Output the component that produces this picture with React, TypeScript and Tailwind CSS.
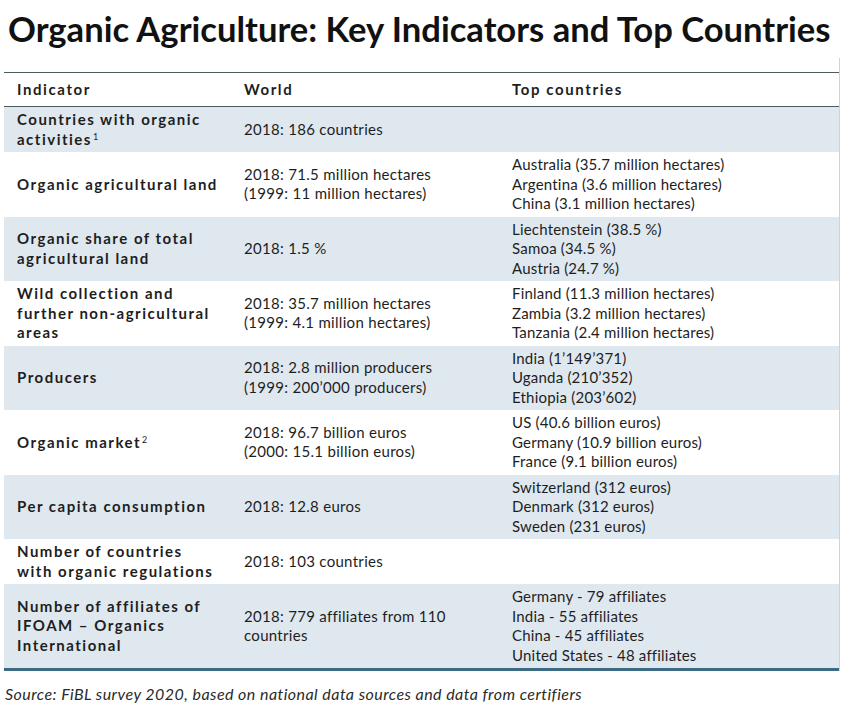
type Row = {
  indicator: React.ReactNode[];
  world: string[];
  top: string[];
  shaded: boolean;
};

const Sup = ({ n }: { n: string }) => (
  <sup className="text-[9px] font-normal tracking-normal ml-[1px]">{n}</sup>
);

const rows: Row[] = [
  {
    indicator: ['Countries with organic', <>activities<Sup n="1" /></>],
    world: ['2018: 186 countries'],
    top: [],
    shaded: true,
  },
  {
    indicator: ['Organic agricultural land'],
    world: ['2018: 71.5 million hectares', '(1999: 11 million hectares)'],
    top: ['Australia (35.7 million hectares)', 'Argentina (3.6 million hectares)', 'China (3.1 million hectares)'],
    shaded: false,
  },
  {
    indicator: ['Organic share of total', 'agricultural land'],
    world: ['2018: 1.5 %'],
    top: ['Liechtenstein (38.5 %)', 'Samoa (34.5 %)', 'Austria (24.7 %)'],
    shaded: true,
  },
  {
    indicator: ['Wild collection and', 'further non-agricultural', 'areas'],
    world: ['2018: 35.7 million hectares', '(1999: 4.1 million hectares)'],
    top: ['Finland (11.3 million hectares)', 'Zambia (3.2 million hectares)', 'Tanzania (2.4 million hectares)'],
    shaded: false,
  },
  {
    indicator: ['Producers'],
    world: ['2018: 2.8 million producers', '(1999: 200\u2019000 producers)'],
    top: ['India (1\u2019149\u2019371)', 'Uganda (210\u2019352)', 'Ethiopia (203\u2019602)'],
    shaded: true,
  },
  {
    indicator: [<>Organic market<Sup n="2" /></>],
    world: ['2018: 96.7 billion euros', '(2000: 15.1 billion euros)'],
    top: ['US (40.6 billion euros)', 'Germany (10.9 billion euros)', 'France (9.1 billion euros)'],
    shaded: false,
  },
  {
    indicator: ['Per capita consumption'],
    world: ['2018: 12.8 euros'],
    top: ['Switzerland (312 euros)', 'Denmark (312 euros)', 'Sweden (231 euros)'],
    shaded: true,
  },
  {
    indicator: ['Number of countries', 'with organic regulations'],
    world: ['2018: 103 countries'],
    top: [],
    shaded: false,
  },
  {
    indicator: ['Number of affiliates of', 'IFOAM \u2013 Organics', 'International'],
    world: ['2018: 779 affiliates from 110', 'countries'],
    top: ['Germany - 79 affiliates', 'India - 55 affiliates', 'China - 45 affiliates', 'United States - 48 affiliates'],
    shaded: true,
  },
];

export default function App() {
  return (
    <div className="w-[842px] h-[712px] bg-white text-[#1e1e1e] font-['Lato','Open_Sans',sans-serif] overflow-hidden">
      {/* Title */}
      <h1 className="pl-[8px] pt-[9px] h-[58px] text-[34.6px] leading-[40px] font-bold text-[#111] whitespace-nowrap">
        Organic Agriculture: Key Indicators and Top Countries
      </h1>

      {/* Table */}
      <div className="ml-[4px] mr-[2px] pt-[14px] border-r border-[#cfd3d6]">
        <div className="border-t-[1.5px] border-b-[1.5px] border-[#4d5a5e] grid grid-cols-[240px_268px_1fr] h-[35px] items-center text-[15px] font-bold">
          <div className="pl-[13px] tracking-[1.6px]">Indicator</div>
          <div className="tracking-[1.6px]">World</div>
          <div className="tracking-[1.6px]">Top countries</div>
        </div>

        {rows.map((row, i) => (
          <div
            key={i}
            className={`grid grid-cols-[240px_268px_1fr] items-center py-[3px] text-[15px] leading-[19.5px] ${
              row.shaded ? 'bg-[#dfe8ef]' : 'bg-white'
            }`}
          >
            <div className="pl-[13px] font-bold tracking-[1.5px] whitespace-nowrap">
              {row.indicator.map((line, j) => (
                <div key={j}>{line}</div>
              ))}
            </div>
            <div className="tracking-[0.3px] whitespace-nowrap">
              {row.world.map((w) => (
                <div key={w}>{w}</div>
              ))}
            </div>
            <div className="tracking-[0.2px] whitespace-nowrap">
              {row.top.map((t) => (
                <div key={t}>{t}</div>
              ))}
            </div>
          </div>
        ))}
        <div className="h-[3px] bg-[#3b6a82]" />
      </div>

      {/* Source */}
      <p className="pl-[5px] pt-[11px] text-[16px] italic tracking-[0.45px] text-[#2a2a2a]">
        Source: FiBL survey 2020, based on national data sources and data from certifiers
      </p>
    </div>
  );
}
